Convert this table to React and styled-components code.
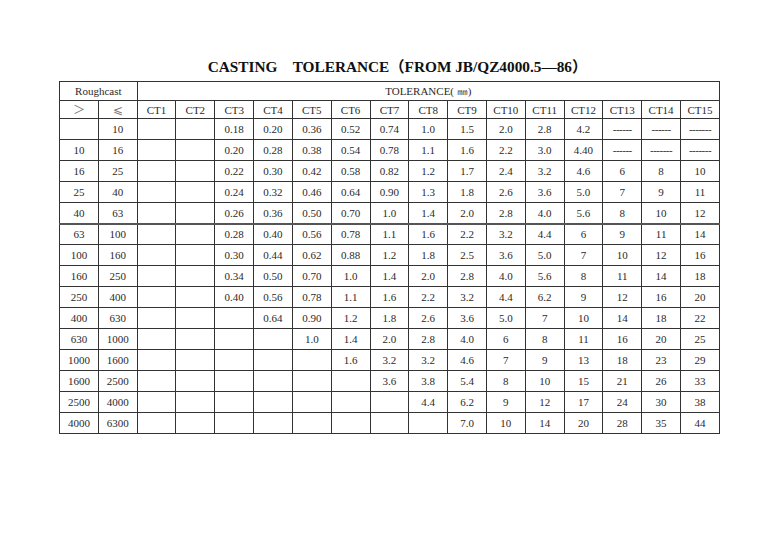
import React from 'react';
import styled, { createGlobalStyle } from 'styled-components';

const GlobalStyle = createGlobalStyle`
  html, body {
    margin: 0;
    padding: 0;
    background: #ffffff;
  }
  body {
    font-family: "Liberation Serif", "Times New Roman", serif;
    color: #222;
  }
`;

const Page = styled.div`
  padding: 57px 0 0 59px;
  width: 661px;
`;

const Title = styled.h1`
  margin: 0 0 5px 16px;
  height: 19px;
  font-size: 15.3px;
  line-height: 19px;
  font-weight: bold;
  text-align: center;
  color: #111;
  white-space: pre;
  font-family: "Liberation Serif", "Noto Sans CJK SC", serif;
`;

const Table = styled.table`
  width: 661px;
  border-collapse: collapse;
  table-layout: fixed;
  font-size: 11px;
  color: #2a2a2a;
`;

const HeadRow = styled.tr`
  height: ${(p) => p.h}px;
`;

const Row = styled.tr`
  height: 21px;
  border-bottom: ${(p) => (p.thick ? '2px solid #555' : '1px solid #333')};
`;

const Cell = styled.td`
  border: 1px solid #333;
  padding: 0;
  text-align: center;
  vertical-align: middle;
  line-height: 14px;
  white-space: nowrap;
  overflow: hidden;
  color: ${(p) => (p.soft ? '#777' : 'inherit')};
  font-family: ${(p) =>
    p.sym ? '"DejaVu Serif", "Noto Sans CJK SC", serif' : 'inherit'};
  font-size: ${(p) => (p.sym ? '12px' : 'inherit')};
  letter-spacing: ${(p) => (p.dash ? '-0.5px' : 'normal')};
`;

const rows = [
  ['', '10', '', '', '0.18', '0.20', '0.36', '0.52', '0.74', '1.0', '1.5', '2.0', '2.8', '4.2', '------', '------', '-------'],
  ['10', '16', '', '', '0.20', '0.28', '0.38', '0.54', '0.78', '1.1', '1.6', '2.2', '3.0', '4.40', '------', '-------', '-------'],
  ['16', '25', '', '', '0.22', '0.30', '0.42', '0.58', '0.82', '1.2', '1.7', '2.4', '3.2', '4.6', '6', '8', '10'],
  ['25', '40', '', '', '0.24', '0.32', '0.46', '0.64', '0.90', '1.3', '1.8', '2.6', '3.6', '5.0', '7', '9', '11'],
  ['40', '63', '', '', '0.26', '0.36', '0.50', '0.70', '1.0', '1.4', '2.0', '2.8', '4.0', '5.6', '8', '10', '12'],
  ['63', '100', '', '', '0.28', '0.40', '0.56', '0.78', '1.1', '1.6', '2.2', '3.2', '4.4', '6', '9', '11', '14'],
  ['100', '160', '', '', '0.30', '0.44', '0.62', '0.88', '1.2', '1.8', '2.5', '3.6', '5.0', '7', '10', '12', '16'],
  ['160', '250', '', '', '0.34', '0.50', '0.70', '1.0', '1.4', '2.0', '2.8', '4.0', '5.6', '8', '11', '14', '18'],
  ['250', '400', '', '', '0.40', '0.56', '0.78', '1.1', '1.6', '2.2', '3.2', '4.4', '6.2', '9', '12', '16', '20'],
  ['400', '630', '', '', '', '0.64', '0.90', '1.2', '1.8', '2.6', '3.6', '5.0', '7', '10', '14', '18', '22'],
  ['630', '1000', '', '', '', '', '1.0', '1.4', '2.0', '2.8', '4.0', '6', '8', '11', '16', '20', '25'],
  ['1000', '1600', '', '', '', '', '', '1.6', '3.2', '3.2', '4.6', '7', '9', '13', '18', '23', '29'],
  ['1600', '2500', '', '', '', '', '', '', '3.6', '3.8', '5.4', '8', '10', '15', '21', '26', '33'],
  ['2500', '4000', '', '', '', '', '', '', '', '4.4', '6.2', '9', '12', '17', '24', '30', '38'],
  ['4000', '6300', '', '', '', '', '', '', '', '', '7.0', '10', '14', '20', '28', '35', '44'],
];

const grades = Array.from({ length: 15 }, (_, i) => `CT${i + 1}`);

const App = () => {
  return (
    <Page>
      <GlobalStyle />
      <Title>CASTING　TOLERANCE（FROM JB/QZ4000.5—86）</Title>
      <Table>
        <colgroup>
          {Array.from({ length: 17 }, (_, i) => (
            <col key={i} />
          ))}
        </colgroup>
        <tbody>
          <HeadRow h={19}>
            <Cell colSpan={2}>Roughcast</Cell>
            <Cell colSpan={15}>TOLERANCE( ㎜)</Cell>
          </HeadRow>
          <HeadRow h={18}>
            <Cell sym soft>＞</Cell>
            <Cell sym soft>⩽</Cell>
            {grades.map((g) => (
              <Cell key={g}>{g}</Cell>
            ))}
          </HeadRow>
          {rows.map((r, i) => (
            <Row key={i} thick={i === 4 ? 1 : 0}>
              {r.map((v, j) => (
                <Cell key={j} dash={v.startsWith('-') ? 1 : 0}>
                  {v}
                </Cell>
              ))}
            </Row>
          ))}
        </tbody>
      </Table>
    </Page>
  );
};

export default App;
